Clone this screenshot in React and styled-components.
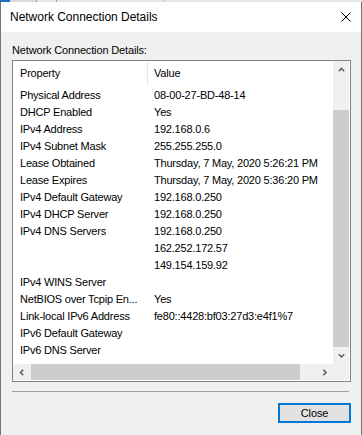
import React from "react";
import styled, { createGlobalStyle } from "styled-components";

const GlobalStyle = createGlobalStyle`
  html, body { margin: 0; padding: 0; background: #f0f0f0; }
  body { font-family: "Liberation Sans", Arial, sans-serif; }
  * { box-sizing: border-box; }
`;

const Screen = styled.div`
  width: 362px;
  height: 435px;
  display: flex;
  flex-direction: column;
  overflow: hidden;
`;

const TopStrip = styled.div`
  height: 2px;
  flex: none;
  background: linear-gradient(to right, #1f6fbf 0 10px, #d9d9d9 10px 36px, #9a9a9a 36px 37px, #e6e6e6 37px 56px, #a0a0a0 56px 57px, #e6e6e6 57px 163px, #bdbdbd 163px 164px, #e6e6e6 164px);
`;

const Window = styled.div`
  flex: 1;
  display: flex;
  flex-direction: column;
  background: #f0f0f0;
  border-left: 1px solid #767676;
  border-right: 1px solid #767676;
`;

const TitleBar = styled.div`
  height: 30px;
  flex: none;
  background: #ffffff;
  display: flex;
  align-items: center;
  justify-content: space-between;
  padding: 0 9px 0 9px;
`;

const TitleText = styled.span`
  font-size: 12px;
  color: #000;
  letter-spacing: -0.02px;
`;

const CloseGlyph = styled.svg`
  width: 10px;
  height: 10px;
  margin-right: 1px;
  margin-top: -1px;
`;

const Body = styled.div`
  display: flex;
  flex-direction: column;
  padding: 0 10px 0 11px;
`;

const GroupLabel = styled.div`
  font-size: 11px;
  letter-spacing: -0.15px;
  line-height: 16px;
  color: #000;
  padding-top: 10px;
  margin-bottom: 2px;
`;

const ListBox = styled.div`
  height: 322px;
  border: 1px solid #828282;
  background: #ffffff;
  padding: 0 1px 1px 0;
  display: grid;
  grid-template-columns: 1fr 16px;
  grid-template-rows: 1fr 16px;
`;

const ListArea = styled.div`
  overflow: hidden;
  font-size: 11px;
  letter-spacing: -0.2px;
  color: #000;
`;

const HeaderRow = styled.div`
  display: grid;
  grid-template-columns: 135px 1fr;
  height: 26px;
`;

const HeaderCell = styled.div`
  position: relative;
  padding: 4px 0 0 ${(p) => (p.$first ? 7 : 6)}px;
  line-height: 17px;
  white-space: nowrap;
  ${(p) =>
    p.$first &&
    `
    &::after {
      content: "";
      position: absolute;
      right: 0;
      top: 1px;
      bottom: 2px;
      width: 1px;
      background: #e5e5e5;
    }
  `}
`;

const Row = styled.div`
  display: grid;
  grid-template-columns: 135px 1fr;
  height: 17px;
  line-height: 17px;
`;

const Cell = styled.div`
  padding-left: ${(p) => (p.$first ? 7 : 6)}px;
  white-space: nowrap;
  overflow: ${(p) => (p.$first ? "hidden" : "visible")};
`;

const VScroll = styled.div`
  background: #f0f0f0;
  display: flex;
  flex-direction: column;
`;

const HScroll = styled.div`
  background: #f0f0f0;
  display: flex;
  flex-direction: row;
`;

const Corner = styled.div`
  background: #f0f0f0;
`;

const ArrowButton = styled.div`
  flex: none;
  width: ${(p) => (p.$horizontal ? "17px" : "16px")};
  height: ${(p) => (p.$horizontal ? "16px" : "17px")};
  display: flex;
  align-items: center;
  justify-content: center;
`;

const Track = styled.div`
  flex: ${(p) => (p.$grow ? 1 : "none")};
  ${(p) => (p.$size ? `flex-basis: ${p.$size}px;` : "")}
`;

const Thumb = styled.div`
  flex: none;
  background: #cdcdcd;
  ${(p) => (p.$horizontal ? `width: ${p.$size}px;` : `height: ${p.$size}px;`)}
`;

const Separator = styled.div`
  height: 1px;
  background: #a0a0a0;
  margin: 9px 2px 0 0;
`;

const Footer = styled.div`
  display: flex;
  justify-content: flex-end;
  padding-top: 11px;
`;

const Button = styled.button`
  width: 73px;
  height: 20px;
  border: 2px solid #0078d7;
  background: #e1e1e1;
  font-family: "Liberation Sans", Arial, sans-serif;
  font-size: 11px;
  letter-spacing: -0.1px;
  color: #000;
  padding: 0;
  margin: 0;
  display: flex;
  align-items: center;
  justify-content: center;
`;

const Chevron = ({ dir }) => {
  const paths = {
    up: "M0.8 4.2 L3.5 1.5 L6.2 4.2",
    down: "M0.8 1.3 L3.5 4 L6.2 1.3",
    left: "M4.2 0.8 L1.5 3.5 L4.2 6.2",
    right: "M1.3 0.8 L4 3.5 L1.3 6.2",
  };
  const horizontal = dir === "left" || dir === "right";
  return (
    <svg
      width={horizontal ? 5.5 : 7}
      height={horizontal ? 7 : 5.5}
      viewBox={horizontal ? "0 0 5.5 7" : "0 0 7 5.5"}
    >
      <path d={paths[dir]} fill="none" stroke="#606060" strokeWidth="1.6" />
    </svg>
  );
};

const rows = [
  ["Physical Address", "08-00-27-BD-48-14"],
  ["DHCP Enabled", "Yes"],
  ["IPv4 Address", "192.168.0.6"],
  ["IPv4 Subnet Mask", "255.255.255.0"],
  ["Lease Obtained", "Thursday, 7 May, 2020 5:26:21 PM"],
  ["Lease Expires", "Thursday, 7 May, 2020 5:36:20 PM"],
  ["IPv4 Default Gateway", "192.168.0.250"],
  ["IPv4 DHCP Server", "192.168.0.250"],
  ["IPv4 DNS Servers", "192.168.0.250"],
  ["", "162.252.172.57"],
  ["", "149.154.159.92"],
  ["IPv4 WINS Server", ""],
  ["NetBIOS over Tcpip En...", "Yes"],
  ["Link-local IPv6 Address", "fe80::4428:bf03:27d3:e4f1%7"],
  ["IPv6 Default Gateway", ""],
  ["IPv6 DNS Server", ""],
];

export default function App() {
  return (
    <>
      <GlobalStyle />
      <Screen>
        <TopStrip />
        <Window>
          <TitleBar>
            <TitleText>Network Connection Details</TitleText>
            <CloseGlyph viewBox="0 0 10 10">
              <path d="M0.5 0.5 L9.5 9.5 M9.5 0.5 L0.5 9.5" stroke="#000" strokeWidth="1" fill="none" />
            </CloseGlyph>
          </TitleBar>
          <Body>
            <GroupLabel>Network Connection Details:</GroupLabel>
            <ListBox>
              <ListArea>
                <HeaderRow>
                  <HeaderCell $first>Property</HeaderCell>
                  <HeaderCell>Value</HeaderCell>
                </HeaderRow>
                {rows.map(([k, v], i) => (
                  <Row key={i}>
                    <Cell $first>{k}</Cell>
                    <Cell>{v}</Cell>
                  </Row>
                ))}
              </ListArea>
              <VScroll>
                <ArrowButton>
                  <Chevron dir="up" />
                </ArrowButton>
                <Track $grow />
                <Thumb $size={237} />
                <ArrowButton>
                  <Chevron dir="down" />
                </ArrowButton>
              </VScroll>
              <HScroll>
                <ArrowButton $horizontal>
                  <Chevron dir="left" />
                </ArrowButton>
                <Track $size={1} />
                <Thumb $horizontal $size={269} />
                <Track $grow />
                <ArrowButton $horizontal>
                  <Chevron dir="right" />
                </ArrowButton>
              </HScroll>
              <Corner />
            </ListBox>
            <Separator />
            <Footer>
              <Button>Close</Button>
            </Footer>
          </Body>
        </Window>
      </Screen>
    </>
  );
}
